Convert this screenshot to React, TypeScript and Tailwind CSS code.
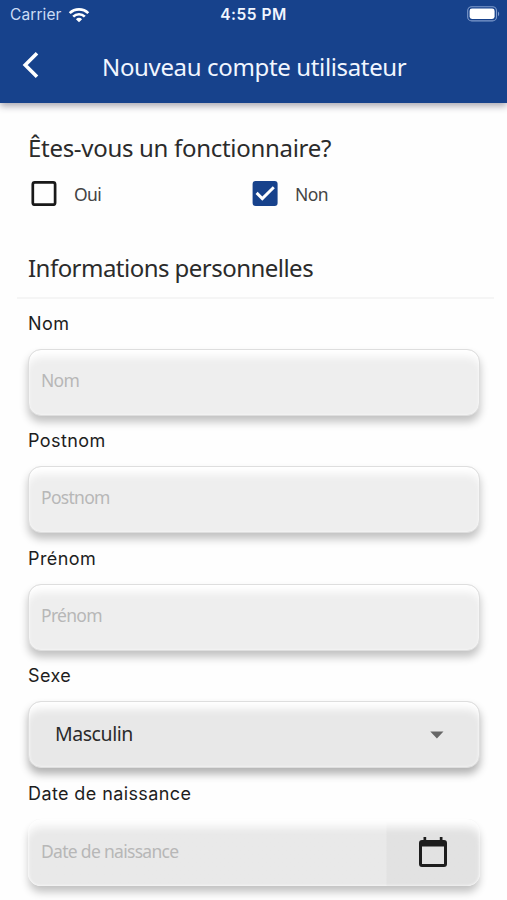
import { ReactNode } from "react";

export default function App() {
    return <div className="h-[900px] w-[507px] overflow-hidden bg-[#fefefe] text-[#2b2b2b]">
        <Header />
        <main className="pl-7 pr-[27px]">
            <h2 className="mt-[29px] h-8 whitespace-nowrap font-['Noto_Sans'] text-[24px] leading-8 tracking-[-0.3px]">Êtes-vous un fonctionnaire?</h2>
            <div className="mt-[13px] flex h-8 items-center">
                <Choice label="Oui" />
                <Choice label="Non" checked />
            </div>
            <h2 className="mt-[43px] h-8 whitespace-nowrap font-['Noto_Sans'] text-[24px] leading-8 tracking-[-0.53px]">Informations personnelles</h2>
            <div className="-ml-[11px] -mr-[14px] mt-[13px] h-0.5 bg-[#f5f5f5]" />
            <Field label="Nom">
                <TextBox placeholder="Nom" />
            </Field>
            <Field label="Postnom">
                <TextBox placeholder="Postnom" />
            </Field>
            <Field label="Prénom">
                <TextBox placeholder="Prénom" />
            </Field>
            <Field label="Sexe">
                <SelectBox value="Masculin" />
            </Field>
            <Field label="Date de naissance">
                <DateBox placeholder="Date de naissance" />
            </Field>
        </main>
    </div>
}

function Header() {
    return <header className="h-[103px] bg-[#17428c] text-[#f1f6ff] shadow-[0_3px_7px_rgba(40,35,60,0.4)]">
        <div className="grid h-[29px] grid-cols-3 items-center pl-[10px] pr-[7px] font-['Inter'] text-[15.5px]">
            <div className="flex items-center gap-[6px] text-[#cbdcf5]">
                <span className="tracking-[0.1px]">Carrier</span>
                <svg width="22" height="16" viewBox="0 0 22 16" fill="none" stroke="#fff" strokeWidth="2.7">
                    <path d="M1.7 6.1a13.3 13.3 0 0 1 18.6 0" />
                    <path d="M5.2 9.6a8.3 8.3 0 0 1 11.6 0" />
                    <path d="M7.9 12.2a4.5 4.5 0 0 1 6.2 0L11 15.2z" fill="#fff" stroke="none" />
                </svg>
            </div>
            <span className="-ml-[3px] text-center font-semibold tracking-[0.5px]">4:55 PM</span>
            <svg className="-mt-px justify-self-end" width="33" height="16" viewBox="0 0 33 16">
                <rect x="0.7" y="0.7" width="28.8" height="14.2" rx="4" fill="none" stroke="#7f9bcb" strokeWidth="1.1" />
                <rect x="2.6" y="2.6" width="25" height="10.4" rx="2.4" fill="#fff" />
                <path d="M31 5.5c1.6.8 1.6 4 0 4.8z" fill="#7f9bcb" />
            </svg>
        </div>
        <div className="flex h-[74px] items-center pl-[22px]">
            <svg className="-mt-[2px]" width="18" height="28" viewBox="0 0 18 28" fill="none" stroke="#fff" strokeWidth="3.6">
                <path d="M15 2.2L3.2 14L15 25.8" />
            </svg>
            <h1 className="ml-[62px] mt-px whitespace-nowrap font-['Noto_Sans'] text-[24px] tracking-[-0.35px]">Nouveau compte utilisateur</h1>
        </div>
    </header>
}

function Choice({ label, checked }: { label: string; checked?: boolean }) {
    return <div className="flex w-[221px] items-center gap-[17px] pl-[3px]">
        <svg width="26" height="26" viewBox="0 0 26 26" fill="none">
            {checked
                ? <>
                    <rect x="0.6" y="0.9" width="25" height="25" rx="3" fill="#17428c" />
                    <path d="M4.6 12.9l5.7 5.7L21.8 7.2" stroke="#fff" strokeWidth="2.9" />
                </>
                : <rect x="1.8" y="2.4" width="22.3" height="22.3" rx="2" stroke="#191919" strokeWidth="2.7" />}
        </svg>
        <span className="mt-[2px] font-['Noto_Sans'] text-[17.5px] tracking-[-0.6px] text-[#444]">{label}</span>
    </div>
}

function Field({ label, children }: { label: string; children: ReactNode }) {
    return <div className="h-[117.4px] pt-[12px]">
        <div className="h-[26px] whitespace-nowrap font-['Inter'] text-[18px] leading-[26px] tracking-[0.4px] text-[#1d1d1d]">{label}</div>
        <div className="mt-[12px]">{children}</div>
    </div>
}

function TextBox({ placeholder }: { placeholder: string }) {
    return <div className="flex h-[67px] items-center rounded-[13px] border border-[#dedede] bg-[#eeeeee] pb-[5px] pl-[12px] shadow-[0_6px_9px_rgba(0,0,0,0.24),inset_0_11px_8px_-4px_#fff,inset_0_0_3px_#f8f8f8]">
        <span className="font-['Noto_Sans'] text-[17.5px] tracking-[-0.7px] text-[#b7b7b7]">{placeholder}</span>
    </div>
}

function SelectBox({ value }: { value: string }) {
    return <div className="flex h-[67px] items-center justify-between rounded-[13px] border border-[#dedede] bg-[#e8e8e8] pb-[2px] pl-[26px] pr-[35px] shadow-[0_6px_9px_rgba(0,0,0,0.3),inset_0_11px_8px_-4px_#fff,inset_0_0_3px_#f8f8f8]">
        <span className="font-['Noto_Sans'] text-[19.5px] tracking-[-0.45px]">{value}</span>
        <svg className="mt-[3px]" width="14" height="8" viewBox="0 0 14 8">
            <path d="M0.3 0.5h13.2L6.9 7.5z" fill="#666" />
        </svg>
    </div>
}

function DateBox({ placeholder }: { placeholder: string }) {
    return <div className="flex h-[67px] items-center overflow-hidden rounded-[13px] bg-linear-to-r from-[#e9e9e9] from-[358px] to-[#e2e2e2] to-[359px] pb-px pl-[13px] shadow-[0_7px_8px_-1px_rgba(0,0,0,0.24),inset_0_11px_8px_-3px_#fefefe,inset_0_0_3px_#fff]">
        <span className="-mt-px w-[378px] font-['Noto_Sans'] text-[17.5px] tracking-[-0.7px] text-[#b7b7b7]">{placeholder}</span>
        <svg className="mt-[2px]" width="28" height="32" viewBox="0 0 28 32" fill="#1d1d1d">
            <path fillRule="evenodd" d="M4.5 0h2.7v3h13.6V0h2.7v3H25a3 3 0 0 1 3 3v21a3 3 0 0 1-3 3H3a3 3 0 0 1-3-3V6a3 3 0 0 1 3-3h1.5zM3 9.4v17.5h22V9.4z" />
        </svg>
    </div>
}
